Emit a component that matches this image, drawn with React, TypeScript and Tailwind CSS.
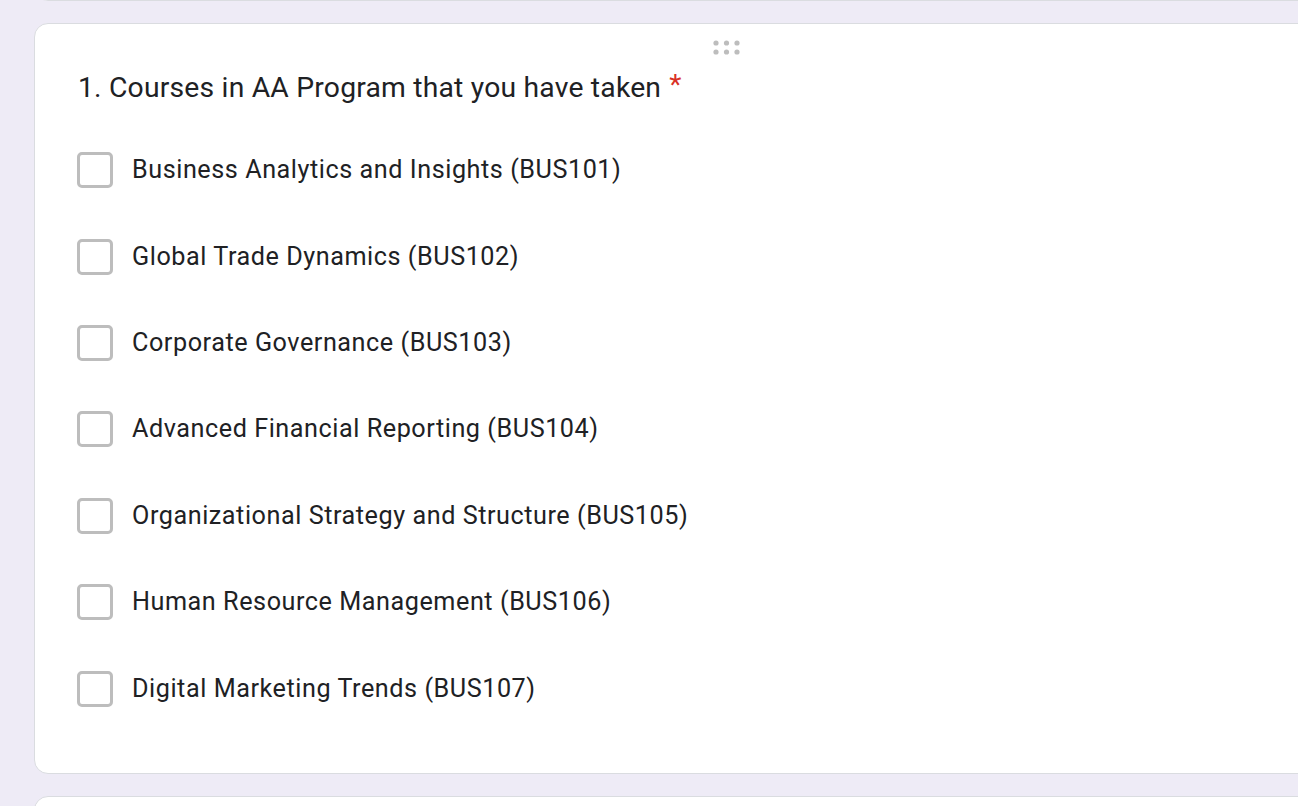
const courses = [
  'Business Analytics and Insights (BUS101)',
  'Global Trade Dynamics (BUS102)',
  'Corporate Governance (BUS103)',
  'Advanced Financial Reporting (BUS104)',
  'Organizational Strategy and Structure (BUS105)',
  'Human Resource Management (BUS106)',
  'Digital Marketing Trends (BUS107)',
];

const DragHandle = () => (
  <svg width="28" height="16" viewBox="0 0 28 16" className="block">
    {[3, 13.5, 24].map((x) =>
      [3, 12].map((y) => <circle key={`${x}-${y}`} cx={x} cy={y} r="2.6" fill="#bdbdbd" />)
    )}
  </svg>
);

export default function App() {
  return (
    <div
      className="w-[1298px] h-[806px] overflow-hidden bg-[#eeebf6] pl-[34px]"
      style={{ fontFamily: 'Roboto, "Noto Sans", sans-serif' }}
    >
      {/* previous card, mostly scrolled out */}
      <div className="w-[1386px] h-[40px] -mt-[39px] bg-white border border-[#dadce0] rounded-[14px]" />

      <div className="mt-[22px] w-[1386px] bg-white border border-[#dadce0] rounded-[14px] pl-[42px] pr-[43px] pb-[41px] flex flex-col">
        <div className="flex justify-center pt-[16px] h-[44px]">
          <DragHandle />
        </div>
        <div className="pl-[1px] text-[28.3px] leading-[39px] text-[#202124] tracking-[0.2px]">
          1. Courses in AA Program that you have taken
          <span className="text-[#d93025] ml-[8px] relative -top-[3px]">*</span>
        </div>
        <div className="mt-[20px] flex flex-col">
          {courses.map((c) => (
            <div key={c} className="h-[86.4px] flex items-center">
              <div className="w-[36px] h-[36px] border-[3px] border-[#bdbdbd] rounded-[5px] shrink-0" />
              <span className="ml-[19px] text-[25.2px] text-[#202124] tracking-[0.55px]">{c}</span>
            </div>
          ))}
        </div>
      </div>

      <div className="mt-[22px] w-[1386px] h-[200px] bg-white border border-[#dadce0] rounded-[14px]" />
    </div>
  );
}
